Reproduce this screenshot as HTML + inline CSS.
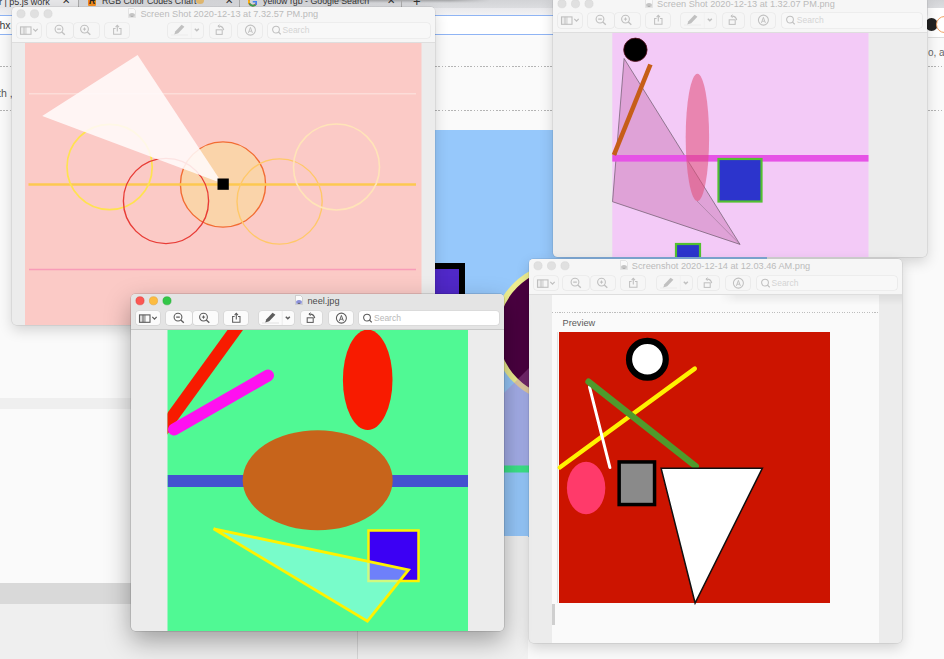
<!DOCTYPE html>
<html><head><meta charset="utf-8"><style>
html,body{margin:0;padding:0}
body{width:944px;height:659px;overflow:hidden;position:relative;background:#fafafa;font-family:"Liberation Sans",sans-serif}
</style></head><body>

<div style="position:absolute;left:0;top:0;width:944px;height:8px;background:linear-gradient(#d2d3d6,#dcdde0)"></div>
<div style="position:absolute;left:300px;top:0;width:190px;height:3px;background:linear-gradient(rgba(0,0,0,0.22),rgba(0,0,0,0));-webkit-mask-image:linear-gradient(90deg,transparent,#000 40px,#000 150px,transparent)"></div>
<div style="position:absolute;left:0;top:0;width:78px;height:8px;background:#e6e6e8"></div>
<div style="position:absolute;left:-1px;top:-3.5px;font-size:9px;color:#333;white-space:nowrap">r | p5.js work</div>
<div style="position:absolute;left:62px;top:-5px;font-size:10px;color:#333">&#x2715;</div>
<div style="position:absolute;left:78px;top:0;width:1px;height:7px;background:#aaa"></div>
<div style="position:absolute;left:87.5px;top:-3px;width:8.5px;height:9px;background:#f08a1c;border-radius:1px;overflow:hidden"><div style="position:absolute;left:1.5px;top:-1px;font-size:9px;font-weight:bold;font-style:italic;color:#222">R</div></div>
<div style="position:absolute;left:102px;top:-4px;font-size:8.8px;color:#333;white-space:nowrap">RGB Color Codes Chart</div>
<div style="position:absolute;left:195.5px;top:-3px;width:8px;height:7px;background:#e0b870;border-radius:50%"></div>
<div style="position:absolute;left:224.5px;top:-5px;font-size:10px;color:#333">&#x2715;</div>
<div style="position:absolute;left:239px;top:0;width:1px;height:7px;background:#aaa"></div>
<svg style="position:absolute;left:247.5px;top:-3px" width="9.5" height="9.5" viewBox="0 0 10 10"><path d="M8.6 2.6 A4.2 4.2 0 1 0 9.2 5.2" fill="none" stroke="#ea4335" stroke-width="1.8"/><path d="M1.2 3.4 A4.2 4.2 0 0 0 1.2 6.6" fill="none" stroke="#fbbc05" stroke-width="1.8"/><path d="M1.4 6.8 A4.2 4.2 0 0 0 8 8" fill="none" stroke="#34a853" stroke-width="1.8"/><path d="M5 5 H9.2 A4.2 4.2 0 0 1 8 8" fill="none" stroke="#4285f4" stroke-width="1.8"/></svg>
<div style="position:absolute;left:263px;top:-4px;font-size:8.8px;color:#333;white-space:nowrap">yellow rgb - Google Search</div>
<div style="position:absolute;left:386.5px;top:-5px;font-size:10px;color:#333">&#x2715;</div>
<div style="position:absolute;left:401px;top:0;width:1px;height:7px;background:#aaa"></div>
<div style="position:absolute;left:413px;top:-6px;font-size:13px;color:#333">+</div>
<div style="position:absolute;left:0;top:8px;width:944px;height:29px;background:linear-gradient(#e9e9ec 0,#f2f2f4 7px,#fbfbfc 8px)"></div><div style="position:absolute;left:928px;top:8px;width:16px;height:29px;background:#fff"></div>
<div style="position:absolute;left:0;top:15px;width:770px;height:20px;background:#fff;border-top:1px solid #8fb4f4;border-bottom:1px solid #8fb4f4;box-sizing:border-box"></div>
<div style="position:absolute;left:-0.5px;top:19px;font-size:10.5px;color:#3a3a3a">hx</div>
<div style="position:absolute;left:0;top:37px;width:944px;height:93px;background:#fafafa"></div>
<div style="position:absolute;left:0;top:66px;width:944px;height:1px;background:repeating-linear-gradient(90deg,#b4b4b4 0 1.6px,transparent 1.6px 3.2px)"></div>
<div style="position:absolute;left:0;top:110px;width:944px;height:1px;background:repeating-linear-gradient(90deg,#b4b4b4 0 1.6px,transparent 1.6px 3.2px)"></div>
<div style="position:absolute;left:-2px;top:86.5px;font-size:10.5px;color:#555">th ,</div>
<div style="position:absolute;left:928px;top:37px;width:16px;height:1px;background:#ddd"></div>
<div style="position:absolute;left:925px;top:18px;width:13px;height:13px;border-radius:50%;background:#222"></div>
<div style="position:absolute;left:936px;top:16px;width:17px;height:17px;border-radius:50%;background:#fff;border:1.5px solid #f0a060;box-sizing:border-box"></div>
<div style="position:absolute;left:928px;top:46.5px;font-size:10px;color:#666;white-space:nowrap">o, at</div>
<div style="position:absolute;left:435px;top:130px;width:332px;height:406.5px;background:#96c8fb"></div>
<div style="position:absolute;left:428px;top:262.7px;width:37.3px;height:40px;background:#5028c8;border:6.5px solid #000;box-sizing:border-box"></div>
<svg style="position:absolute;left:0;top:0" width="944" height="659">
<circle cx="562.7" cy="332.8" r="67" fill="#4a0040" stroke="#eeee90" stroke-width="5.5"/>
<polygon points="482,415 560,337 560,466 482,466" fill="#c478c4" fill-opacity="0.32"/>
<rect x="435" y="465.5" width="335" height="7" fill="#3ce488"/>
</svg>
<div style="position:absolute;left:0;top:398px;width:131px;height:11px;background:#efefef"></div>
<div style="position:absolute;left:0;top:583px;width:131px;height:21px;background:#d9d9d9"></div>
<div style="position:absolute;left:0;top:604px;width:357px;height:55px;background:#efefef"></div>
<div style="position:absolute;left:357px;top:604px;width:1px;height:55px;background:#d8d8d8"></div>
<div style="position:absolute;left:358px;top:536px;width:170px;height:123px;background:#f1f1f1"></div>

<div style="position:absolute;left:12px;top:6.6px;width:422.5px;height:318px;border-radius:4.5px;overflow:hidden;background:#ececec;box-shadow:0 0 0 0.5px rgba(0,0,0,0.12), 0 5px 14px rgba(0,0,0,0.16);z-index:2">
<div style="position:absolute;left:0;top:0;width:422.5px;height:36px;background:#f6f6f6;border-bottom:0.5px solid #dedede;box-sizing:border-box"><svg style="position:absolute;left:0;top:0" width="46" height="14"><circle cx="9" cy="6.75" r="4.1" fill="#e0e0e0" stroke="#d4d4d4" stroke-width="0.5"/><circle cx="22.5" cy="6.75" r="4.1" fill="#e0e0e0" stroke="#d4d4d4" stroke-width="0.5"/><circle cx="36" cy="6.75" r="4.1" fill="#e0e0e0" stroke="#d4d4d4" stroke-width="0.5"/></svg><div style="position:absolute;left:0;width:422.5px;top:1px;text-align:center;font-size:9.2px;line-height:11px;color:#bbbbbb;white-space:nowrap"><svg width="8" height="10" viewBox="0 0 8 10" style="margin-right:4px;vertical-align:-1.5px;opacity:0.5;filter:grayscale(1)"><path d="M0.5 0.5 H5.5 L7.5 2.5 V9.5 H0.5 Z" fill="#fbfbfb" stroke="#b8b8b8" stroke-width="0.6"/><path d="M1.2 6 Q4 3.8 6.8 6 V8.8 H1.2 Z" fill="#8a90d8"/><path d="M2.5 8.8 Q4 6.5 5.5 8.8 Z" fill="#555"/></svg>Screen Shot 2020-12-13 at 7.32.57 PM.png</div><div style="position:absolute;left:5px;top:16.5px;width:24px;height:14.5px;border-radius:3px;background:#f6f6f6;box-shadow:0 0 0 0.6px #e4e4e4, 0 0.5px 0.5px rgba(0,0,0,0.03);overflow:hidden"><svg width="24" height="15" viewBox="0 0 24 15"><rect x="3.5" y="3.9" width="10.5" height="7.4" fill="none" stroke="#c0c0c0" stroke-width="1.1"/><line x1="7" y1="3.9" x2="7" y2="11.3" stroke="#c0c0c0" stroke-width="1"/><line x1="9" y1="3.9" x2="9" y2="11.3" stroke="#c0c0c0" stroke-width="0.7"/><rect x="3.5" y="3.9" width="5.5" height="7.4" fill="#c0c0c0" fill-opacity="0.18"/><path d="M16.3 5.9 L18.5 8.1 L20.7 5.9" fill="none" stroke="#c0c0c0" stroke-width="1.3"/></svg></div><div style="position:absolute;left:34.5px;top:16.5px;width:26px;height:14.5px;border-radius:3px;background:#f6f6f6;box-shadow:0 0 0 0.6px #e4e4e4, 0 0.5px 0.5px rgba(0,0,0,0.03);overflow:hidden"><svg width="26" height="15" viewBox="0 0 26 15"><circle cx="12" cy="6.1" r="3.9" fill="none" stroke="#c0c0c0" stroke-width="1.1"/><line x1="14.8" y1="8.9" x2="17.8" y2="11.7" stroke="#c0c0c0" stroke-width="1.3"/><line x1="10.2" y1="6.1" x2="13.8" y2="6.1" stroke="#c0c0c0" stroke-width="1.1"/></svg></div><div style="position:absolute;left:62px;top:16.5px;width:24.5px;height:14.5px;border-radius:3px;background:#f6f6f6;box-shadow:0 0 0 0.6px #e4e4e4, 0 0.5px 0.5px rgba(0,0,0,0.03);overflow:hidden"><svg width="24" height="15" viewBox="0 0 24 15"><circle cx="10.5" cy="6.1" r="3.9" fill="none" stroke="#c0c0c0" stroke-width="1.1"/><line x1="13.3" y1="8.9" x2="16.3" y2="11.7" stroke="#c0c0c0" stroke-width="1.3"/><line x1="8.9" y1="6.1" x2="12.1" y2="6.1" stroke="#c0c0c0" stroke-width="1"/><line x1="10.5" y1="4.5" x2="10.5" y2="7.7" stroke="#c0c0c0" stroke-width="1"/></svg></div><div style="position:absolute;left:92.5px;top:16.5px;width:24px;height:14.5px;border-radius:3px;background:#f6f6f6;box-shadow:0 0 0 0.6px #e4e4e4, 0 0.5px 0.5px rgba(0,0,0,0.03);overflow:hidden"><svg width="24" height="15" viewBox="0 0 24 15"><path d="M10.6 5.5 L8.6 5.5 L8.6 11.2 L16 11.2 L16 5.5 L14 5.5" fill="none" stroke="#c0c0c0" stroke-width="1.05"/><line x1="12.3" y1="2.6" x2="12.3" y2="8.4" stroke="#c0c0c0" stroke-width="1.1"/><path d="M10.6 4.2 L12.3 2.4 L14 4.2" fill="none" stroke="#c0c0c0" stroke-width="1.1"/></svg></div><div style="position:absolute;left:156px;top:16.5px;width:35px;height:14.5px;border-radius:3px;background:#f6f6f6;box-shadow:0 0 0 0.6px #e4e4e4, 0 0.5px 0.5px rgba(0,0,0,0.03);overflow:hidden"><svg width="35" height="15" viewBox="0 0 35 15"><path d="M6.2 11.6 L7.4 8.2 L13.6 1.8 L16.4 3.8 L10.2 10.2 Z" fill="#c0c0c0"/><line x1="3" y1="12" x2="20" y2="12" stroke="#c0c0c0" stroke-width="0.6" opacity="0.25"/><line x1="23.2" y1="0" x2="23.2" y2="15" stroke="#c0c0c0" stroke-width="0.5" opacity="0.2"/><path d="M26.8 5.8 L28.8 7.8 L30.8 5.8" fill="none" stroke="#c0c0c0" stroke-width="1.5"/></svg></div><div style="position:absolute;left:197.5px;top:16.5px;width:21px;height:14.5px;border-radius:3px;background:#f6f6f6;box-shadow:0 0 0 0.6px #e4e4e4, 0 0.5px 0.5px rgba(0,0,0,0.03);overflow:hidden"><svg width="21" height="15" viewBox="0 0 21 15"><rect x="6.2" y="6.8" width="6" height="4.6" fill="none" stroke="#c0c0c0" stroke-width="1.05"/><path d="M8.3 3.2 Q12.6 2.6 13.8 7.2" fill="none" stroke="#c0c0c0" stroke-width="1.05"/><path d="M9.4 1.6 L7.9 3.2 L9.6 4.6" fill="none" stroke="#c0c0c0" stroke-width="1"/></svg></div><div style="position:absolute;left:225.5px;top:16.5px;width:24px;height:14.5px;border-radius:3px;background:#f6f6f6;box-shadow:0 0 0 0.6px #e4e4e4, 0 0.5px 0.5px rgba(0,0,0,0.03);overflow:hidden"><svg width="24" height="15" viewBox="0 0 24 15"><circle cx="12.4" cy="7.1" r="5" fill="none" stroke="#c0c0c0" stroke-width="1.05"/><path d="M10.4 9.9 L12.4 4.4 L14.4 9.9 M11.1 8.2 L13.7 8.2" fill="none" stroke="#c0c0c0" stroke-width="0.95"/></svg></div><div style="position:absolute;left:255.5px;top:16.5px;width:162px;height:14.5px;border-radius:3px;background:#f8f8f8;box-shadow:0 0 0 0.6px #e4e4e4;overflow:hidden"><div style="position:absolute;left:2px;top:0"><svg width="12" height="15" viewBox="0 0 12 15"><circle cx="6" cy="6.6" r="3.4" fill="none" stroke="#c0c0c0" stroke-width="1.05"/><line x1="8.5" y1="9.1" x2="10.8" y2="11.4" stroke="#c0c0c0" stroke-width="1.3"/></svg></div><div style="position:absolute;left:15px;top:2px;font-size:8.5px;color:#d4d4d4">Search</div></div></div>
<div style="position:absolute;left:0;top:36px;width:422.5px;height:282px;overflow:hidden"><svg width="422" height="283" viewBox="0 0 422 283" style="position:absolute;left:0.5px;top:0.4px">
<rect x="12" y="0" width="396.5" height="283" fill="#fbcac6"/>
<line x1="16" y1="50.8" x2="403" y2="50.8" stroke="#fde6e2" stroke-width="1"/>
<line x1="16" y1="226.5" x2="403" y2="226.5" stroke="#f89cb8" stroke-width="1.3"/>
<circle cx="210" cy="141.5" r="42.6" fill="#fad4aa" stroke="#f26c32" stroke-width="1.4"/>
<line x1="15.5" y1="141.5" x2="403" y2="141.5" stroke="#fdc850" stroke-width="2.5"/>
<circle cx="96.6" cy="124" r="42.6" fill="none" stroke="#ffe250" stroke-width="1.7"/>
<circle cx="153" cy="158" r="42.6" fill="none" stroke="#e83c36" stroke-width="1.4"/>
<circle cx="266.6" cy="158.5" r="42.6" fill="none" stroke="#ffc868" stroke-width="1.4"/>
<circle cx="323.5" cy="124" r="43" fill="none" stroke="#ffe4b8" stroke-width="1.6"/>
<polygon points="124.6,12 29.2,73 209.4,140.5" fill="#fffafa" fill-opacity="0.88"/>
<rect x="204.5" y="135.5" width="11.3" height="11.3" fill="#000"/>
</svg></div>
</div>
<div style="position:absolute;left:553px;top:-3.5px;width:373.8px;height:260.2px;border-radius:4.5px;overflow:hidden;background:#ececec;box-shadow:0 0 0 0.5px rgba(0,0,0,0.12), 0 5px 14px rgba(0,0,0,0.16);z-index:3">
<div style="position:absolute;left:0;top:0;width:373.8px;height:36px;background:#f6f6f6;border-bottom:0.5px solid #dedede;box-sizing:border-box"><svg style="position:absolute;left:0;top:0" width="46" height="14"><circle cx="9" cy="6.75" r="4.1" fill="#e0e0e0" stroke="#d4d4d4" stroke-width="0.5"/><circle cx="22.5" cy="6.75" r="4.1" fill="#e0e0e0" stroke="#d4d4d4" stroke-width="0.5"/><circle cx="36" cy="6.75" r="4.1" fill="#e0e0e0" stroke="#d4d4d4" stroke-width="0.5"/></svg><div style="position:absolute;left:0;width:373.8px;top:1px;text-align:center;font-size:9.2px;line-height:11px;color:#bbbbbb;white-space:nowrap"><svg width="8" height="10" viewBox="0 0 8 10" style="margin-right:4px;vertical-align:-1.5px;opacity:0.5;filter:grayscale(1)"><path d="M0.5 0.5 H5.5 L7.5 2.5 V9.5 H0.5 Z" fill="#fbfbfb" stroke="#b8b8b8" stroke-width="0.6"/><path d="M1.2 6 Q4 3.8 6.8 6 V8.8 H1.2 Z" fill="#8a90d8"/><path d="M2.5 8.8 Q4 6.5 5.5 8.8 Z" fill="#555"/></svg>Screen Shot 2020-12-13 at 1.32.07 PM.png</div><div style="position:absolute;left:5px;top:16.5px;width:24px;height:14.5px;border-radius:3px;background:#f6f6f6;box-shadow:0 0 0 0.6px #e4e4e4, 0 0.5px 0.5px rgba(0,0,0,0.03);overflow:hidden"><svg width="24" height="15" viewBox="0 0 24 15"><rect x="3.5" y="3.9" width="10.5" height="7.4" fill="none" stroke="#c0c0c0" stroke-width="1.1"/><line x1="7" y1="3.9" x2="7" y2="11.3" stroke="#c0c0c0" stroke-width="1"/><line x1="9" y1="3.9" x2="9" y2="11.3" stroke="#c0c0c0" stroke-width="0.7"/><rect x="3.5" y="3.9" width="5.5" height="7.4" fill="#c0c0c0" fill-opacity="0.18"/><path d="M16.3 5.9 L18.5 8.1 L20.7 5.9" fill="none" stroke="#c0c0c0" stroke-width="1.3"/></svg></div><div style="position:absolute;left:34.5px;top:16.5px;width:26px;height:14.5px;border-radius:3px;background:#f6f6f6;box-shadow:0 0 0 0.6px #e4e4e4, 0 0.5px 0.5px rgba(0,0,0,0.03);overflow:hidden"><svg width="26" height="15" viewBox="0 0 26 15"><circle cx="12" cy="6.1" r="3.9" fill="none" stroke="#c0c0c0" stroke-width="1.1"/><line x1="14.8" y1="8.9" x2="17.8" y2="11.7" stroke="#c0c0c0" stroke-width="1.3"/><line x1="10.2" y1="6.1" x2="13.8" y2="6.1" stroke="#c0c0c0" stroke-width="1.1"/></svg></div><div style="position:absolute;left:62px;top:16.5px;width:24.5px;height:14.5px;border-radius:3px;background:#f6f6f6;box-shadow:0 0 0 0.6px #e4e4e4, 0 0.5px 0.5px rgba(0,0,0,0.03);overflow:hidden"><svg width="24" height="15" viewBox="0 0 24 15"><circle cx="10.5" cy="6.1" r="3.9" fill="none" stroke="#c0c0c0" stroke-width="1.1"/><line x1="13.3" y1="8.9" x2="16.3" y2="11.7" stroke="#c0c0c0" stroke-width="1.3"/><line x1="8.9" y1="6.1" x2="12.1" y2="6.1" stroke="#c0c0c0" stroke-width="1"/><line x1="10.5" y1="4.5" x2="10.5" y2="7.7" stroke="#c0c0c0" stroke-width="1"/></svg></div><div style="position:absolute;left:92.5px;top:16.5px;width:24px;height:14.5px;border-radius:3px;background:#f6f6f6;box-shadow:0 0 0 0.6px #e4e4e4, 0 0.5px 0.5px rgba(0,0,0,0.03);overflow:hidden"><svg width="24" height="15" viewBox="0 0 24 15"><path d="M10.6 5.5 L8.6 5.5 L8.6 11.2 L16 11.2 L16 5.5 L14 5.5" fill="none" stroke="#c0c0c0" stroke-width="1.05"/><line x1="12.3" y1="2.6" x2="12.3" y2="8.4" stroke="#c0c0c0" stroke-width="1.1"/><path d="M10.6 4.2 L12.3 2.4 L14 4.2" fill="none" stroke="#c0c0c0" stroke-width="1.1"/></svg></div><div style="position:absolute;left:128px;top:16.5px;width:35px;height:14.5px;border-radius:3px;background:#f6f6f6;box-shadow:0 0 0 0.6px #e4e4e4, 0 0.5px 0.5px rgba(0,0,0,0.03);overflow:hidden"><svg width="35" height="15" viewBox="0 0 35 15"><path d="M6.2 11.6 L7.4 8.2 L13.6 1.8 L16.4 3.8 L10.2 10.2 Z" fill="#c0c0c0"/><line x1="3" y1="12" x2="20" y2="12" stroke="#c0c0c0" stroke-width="0.6" opacity="0.25"/><line x1="23.2" y1="0" x2="23.2" y2="15" stroke="#c0c0c0" stroke-width="0.5" opacity="0.2"/><path d="M26.8 5.8 L28.8 7.8 L30.8 5.8" fill="none" stroke="#c0c0c0" stroke-width="1.5"/></svg></div><div style="position:absolute;left:169.5px;top:16.5px;width:21px;height:14.5px;border-radius:3px;background:#f6f6f6;box-shadow:0 0 0 0.6px #e4e4e4, 0 0.5px 0.5px rgba(0,0,0,0.03);overflow:hidden"><svg width="21" height="15" viewBox="0 0 21 15"><rect x="6.2" y="6.8" width="6" height="4.6" fill="none" stroke="#c0c0c0" stroke-width="1.05"/><path d="M8.3 3.2 Q12.6 2.6 13.8 7.2" fill="none" stroke="#c0c0c0" stroke-width="1.05"/><path d="M9.4 1.6 L7.9 3.2 L9.6 4.6" fill="none" stroke="#c0c0c0" stroke-width="1"/></svg></div><div style="position:absolute;left:197.5px;top:16.5px;width:24px;height:14.5px;border-radius:3px;background:#f6f6f6;box-shadow:0 0 0 0.6px #e4e4e4, 0 0.5px 0.5px rgba(0,0,0,0.03);overflow:hidden"><svg width="24" height="15" viewBox="0 0 24 15"><circle cx="12.4" cy="7.1" r="5" fill="none" stroke="#c0c0c0" stroke-width="1.05"/><path d="M10.4 9.9 L12.4 4.4 L14.4 9.9 M11.1 8.2 L13.7 8.2" fill="none" stroke="#c0c0c0" stroke-width="0.95"/></svg></div><div style="position:absolute;left:228.8px;top:16.5px;width:140px;height:14.5px;border-radius:3px;background:#f8f8f8;box-shadow:0 0 0 0.6px #e4e4e4;overflow:hidden"><div style="position:absolute;left:2px;top:0"><svg width="12" height="15" viewBox="0 0 12 15"><circle cx="6" cy="6.6" r="3.4" fill="none" stroke="#c0c0c0" stroke-width="1.05"/><line x1="8.5" y1="9.1" x2="10.8" y2="11.4" stroke="#c0c0c0" stroke-width="1.3"/></svg></div><div style="position:absolute;left:15px;top:2px;font-size:8.5px;color:#d4d4d4">Search</div></div></div>
<div style="position:absolute;left:0;top:36px;width:373.8px;height:224.2px;overflow:hidden"><svg width="374" height="224" viewBox="0 0 374 224" style="position:absolute;left:0;top:0">
<rect x="59.3" y="0" width="256.2" height="224" fill="#f3caf7"/>
<polygon points="71.1,25.5 59.5,168.7 187,211.4" fill="#cc7ab8" fill-opacity="0.5" stroke="#6a5a6a" stroke-width="0.7"/>
<rect x="59.3" y="122" width="256.2" height="6.6" fill="#e653e6"/>
<ellipse cx="144.4" cy="104.5" rx="11.7" ry="63.7" fill="#e04e78" fill-opacity="0.56"/>
<line x1="144" y1="168" x2="187" y2="211.4" stroke="#6a5a6a" stroke-width="0.7" opacity="0.5"/>
<rect x="165.5" y="126" width="43" height="42.5" fill="#2c34cc" stroke="#52c030" stroke-width="2.2"/>
<rect x="123" y="211" width="24" height="20" fill="#2c34cc" stroke="#52c030" stroke-width="2.2"/>
<line x1="97.4" y1="31.5" x2="60.9" y2="122" stroke="#c65e18" stroke-width="4.6"/>
<circle cx="82.4" cy="16.8" r="11.7" fill="#000" stroke="#5a1020" stroke-width="0.8"/>
</svg></div>
</div>
<div style="position:absolute;left:528.5px;top:259px;width:373px;height:384px;border-radius:4.5px;overflow:hidden;background:#ececec;box-shadow:0 0 0 0.5px rgba(0,0,0,0.12), 0 5px 14px rgba(0,0,0,0.16);z-index:4">
<div style="position:absolute;left:0;top:0;width:373px;height:36px;background:#f6f6f6;border-bottom:0.5px solid #dedede;box-sizing:border-box"><svg style="position:absolute;left:0;top:0" width="46" height="14"><circle cx="9" cy="6.75" r="4.1" fill="#e0e0e0" stroke="#d4d4d4" stroke-width="0.5"/><circle cx="22.5" cy="6.75" r="4.1" fill="#e0e0e0" stroke="#d4d4d4" stroke-width="0.5"/><circle cx="36" cy="6.75" r="4.1" fill="#e0e0e0" stroke="#d4d4d4" stroke-width="0.5"/></svg><div style="position:absolute;left:0;width:373px;top:1px;text-align:center;font-size:9.2px;line-height:11px;color:#bbbbbb;white-space:nowrap"><svg width="8" height="10" viewBox="0 0 8 10" style="margin-right:4px;vertical-align:-1.5px;opacity:0.5;filter:grayscale(1)"><path d="M0.5 0.5 H5.5 L7.5 2.5 V9.5 H0.5 Z" fill="#fbfbfb" stroke="#b8b8b8" stroke-width="0.6"/><path d="M1.2 6 Q4 3.8 6.8 6 V8.8 H1.2 Z" fill="#8a90d8"/><path d="M2.5 8.8 Q4 6.5 5.5 8.8 Z" fill="#555"/></svg>Screenshot 2020-12-14 at 12.03.46 AM.png</div><div style="position:absolute;left:5px;top:16.5px;width:24px;height:14.5px;border-radius:3px;background:#f6f6f6;box-shadow:0 0 0 0.6px #e4e4e4, 0 0.5px 0.5px rgba(0,0,0,0.03);overflow:hidden"><svg width="24" height="15" viewBox="0 0 24 15"><rect x="3.5" y="3.9" width="10.5" height="7.4" fill="none" stroke="#c0c0c0" stroke-width="1.1"/><line x1="7" y1="3.9" x2="7" y2="11.3" stroke="#c0c0c0" stroke-width="1"/><line x1="9" y1="3.9" x2="9" y2="11.3" stroke="#c0c0c0" stroke-width="0.7"/><rect x="3.5" y="3.9" width="5.5" height="7.4" fill="#c0c0c0" fill-opacity="0.18"/><path d="M16.3 5.9 L18.5 8.1 L20.7 5.9" fill="none" stroke="#c0c0c0" stroke-width="1.3"/></svg></div><div style="position:absolute;left:34.5px;top:16.5px;width:26px;height:14.5px;border-radius:3px;background:#f6f6f6;box-shadow:0 0 0 0.6px #e4e4e4, 0 0.5px 0.5px rgba(0,0,0,0.03);overflow:hidden"><svg width="26" height="15" viewBox="0 0 26 15"><circle cx="12" cy="6.1" r="3.9" fill="none" stroke="#c0c0c0" stroke-width="1.1"/><line x1="14.8" y1="8.9" x2="17.8" y2="11.7" stroke="#c0c0c0" stroke-width="1.3"/><line x1="10.2" y1="6.1" x2="13.8" y2="6.1" stroke="#c0c0c0" stroke-width="1.1"/></svg></div><div style="position:absolute;left:62px;top:16.5px;width:24.5px;height:14.5px;border-radius:3px;background:#f6f6f6;box-shadow:0 0 0 0.6px #e4e4e4, 0 0.5px 0.5px rgba(0,0,0,0.03);overflow:hidden"><svg width="24" height="15" viewBox="0 0 24 15"><circle cx="10.5" cy="6.1" r="3.9" fill="none" stroke="#c0c0c0" stroke-width="1.1"/><line x1="13.3" y1="8.9" x2="16.3" y2="11.7" stroke="#c0c0c0" stroke-width="1.3"/><line x1="8.9" y1="6.1" x2="12.1" y2="6.1" stroke="#c0c0c0" stroke-width="1"/><line x1="10.5" y1="4.5" x2="10.5" y2="7.7" stroke="#c0c0c0" stroke-width="1"/></svg></div><div style="position:absolute;left:92.5px;top:16.5px;width:24px;height:14.5px;border-radius:3px;background:#f6f6f6;box-shadow:0 0 0 0.6px #e4e4e4, 0 0.5px 0.5px rgba(0,0,0,0.03);overflow:hidden"><svg width="24" height="15" viewBox="0 0 24 15"><path d="M10.6 5.5 L8.6 5.5 L8.6 11.2 L16 11.2 L16 5.5 L14 5.5" fill="none" stroke="#c0c0c0" stroke-width="1.05"/><line x1="12.3" y1="2.6" x2="12.3" y2="8.4" stroke="#c0c0c0" stroke-width="1.1"/><path d="M10.6 4.2 L12.3 2.4 L14 4.2" fill="none" stroke="#c0c0c0" stroke-width="1.1"/></svg></div><div style="position:absolute;left:128px;top:16.5px;width:35px;height:14.5px;border-radius:3px;background:#f6f6f6;box-shadow:0 0 0 0.6px #e4e4e4, 0 0.5px 0.5px rgba(0,0,0,0.03);overflow:hidden"><svg width="35" height="15" viewBox="0 0 35 15"><path d="M6.2 11.6 L7.4 8.2 L13.6 1.8 L16.4 3.8 L10.2 10.2 Z" fill="#c0c0c0"/><line x1="3" y1="12" x2="20" y2="12" stroke="#c0c0c0" stroke-width="0.6" opacity="0.25"/><line x1="23.2" y1="0" x2="23.2" y2="15" stroke="#c0c0c0" stroke-width="0.5" opacity="0.2"/><path d="M26.8 5.8 L28.8 7.8 L30.8 5.8" fill="none" stroke="#c0c0c0" stroke-width="1.5"/></svg></div><div style="position:absolute;left:169.5px;top:16.5px;width:21px;height:14.5px;border-radius:3px;background:#f6f6f6;box-shadow:0 0 0 0.6px #e4e4e4, 0 0.5px 0.5px rgba(0,0,0,0.03);overflow:hidden"><svg width="21" height="15" viewBox="0 0 21 15"><rect x="6.2" y="6.8" width="6" height="4.6" fill="none" stroke="#c0c0c0" stroke-width="1.05"/><path d="M8.3 3.2 Q12.6 2.6 13.8 7.2" fill="none" stroke="#c0c0c0" stroke-width="1.05"/><path d="M9.4 1.6 L7.9 3.2 L9.6 4.6" fill="none" stroke="#c0c0c0" stroke-width="1"/></svg></div><div style="position:absolute;left:197.5px;top:16.5px;width:24px;height:14.5px;border-radius:3px;background:#f6f6f6;box-shadow:0 0 0 0.6px #e4e4e4, 0 0.5px 0.5px rgba(0,0,0,0.03);overflow:hidden"><svg width="24" height="15" viewBox="0 0 24 15"><circle cx="12.4" cy="7.1" r="5" fill="none" stroke="#c0c0c0" stroke-width="1.05"/><path d="M10.4 9.9 L12.4 4.4 L14.4 9.9 M11.1 8.2 L13.7 8.2" fill="none" stroke="#c0c0c0" stroke-width="0.95"/></svg></div><div style="position:absolute;left:228px;top:16.5px;width:140px;height:14.5px;border-radius:3px;background:#f8f8f8;box-shadow:0 0 0 0.6px #e4e4e4;overflow:hidden"><div style="position:absolute;left:2px;top:0"><svg width="12" height="15" viewBox="0 0 12 15"><circle cx="6" cy="6.6" r="3.4" fill="none" stroke="#c0c0c0" stroke-width="1.05"/><line x1="8.5" y1="9.1" x2="10.8" y2="11.4" stroke="#c0c0c0" stroke-width="1.3"/></svg></div><div style="position:absolute;left:15px;top:2px;font-size:8.5px;color:#d4d4d4">Search</div></div></div>
<div style="position:absolute;left:0;top:36px;width:373px;height:348px;overflow:hidden"><div style="position:absolute;left:23px;top:0;width:327.5px;height:348px;background:#fafafa"></div>
<div style="position:absolute;left:190px;top:0;width:183px;height:10px;background:linear-gradient(rgba(0,0,0,0.065),rgba(0,0,0,0));-webkit-mask-image:linear-gradient(90deg,transparent 0,#000 18px)"></div>
<div style="position:absolute;left:23px;top:17px;width:327.5px;height:1px;background:repeating-linear-gradient(90deg,#bdbdbd 0 1px,transparent 1px 2.5px)"></div>
<div style="position:absolute;left:34px;top:23px;font-size:9.2px;color:#5a5a5a">Preview</div>
<div style="position:absolute;left:23px;top:309px;width:3px;height:21px;background:#cfcfcf"></div>
<div style="position:absolute;left:28.5px;top:37px;width:0.6px;height:271px;background:#e0e0e0"></div>
<svg width="373" height="348" viewBox="0 0 373 348" style="position:absolute;left:0;top:0">
<rect x="30" y="37" width="271" height="271" fill="#cc1400"/>
<ellipse cx="57.1" cy="193" rx="19.2" ry="26.3" fill="#ff3a6a"/>
<line x1="30.7" y1="172.5" x2="165.8" y2="73.6" stroke="#fff200" stroke-width="4.4" stroke-linecap="round"/>
<line x1="60.5" y1="91.8" x2="80.9" y2="172.5" stroke="#ffffff" stroke-width="3" stroke-linecap="round"/>
<line x1="59.6" y1="86.8" x2="166.7" y2="171.3" stroke="#4f9a2c" stroke-width="6.5" stroke-linecap="round"/>
<circle cx="118.4" cy="64.3" r="18.4" fill="#fff" stroke="#000" stroke-width="6.2"/>
<rect x="90.15" y="166.95" width="35.4" height="42.6" fill="#8a8a8a" stroke="#000" stroke-width="3.5"/>
<polygon points="132.1,173.2 233.4,173.2 166.1,308" fill="#fff" stroke="#111" stroke-width="1.5"/>
</svg></div>
</div>
<div style="position:absolute;left:131px;top:294.4px;width:373px;height:336.5px;border-radius:4.5px;overflow:hidden;background:#ececec;box-shadow:0 0 0 0.5px rgba(0,0,0,0.2), 0 10px 26px rgba(0,0,0,0.34);z-index:5">
<div style="position:absolute;left:0;top:0;width:373px;height:36px;background:#e4e4e4;border-bottom:0.5px solid #c8c8c8;box-sizing:border-box"><svg style="position:absolute;left:0;top:0" width="46" height="14"><circle cx="9" cy="6.75" r="4.1" fill="#fc5753" stroke="#df3d39" stroke-width="0.5"/><circle cx="22.5" cy="6.75" r="4.1" fill="#fdbc40" stroke="#de9f34" stroke-width="0.5"/><circle cx="36" cy="6.75" r="4.1" fill="#33c748" stroke="#27aa35" stroke-width="0.5"/></svg><div style="position:absolute;left:0;width:373px;top:1px;text-align:center;font-size:9.2px;line-height:11px;color:#4d4d4d;white-space:nowrap"><svg width="8" height="10" viewBox="0 0 8 10" style="margin-right:4px;vertical-align:-1.5px;"><path d="M0.5 0.5 H5.5 L7.5 2.5 V9.5 H0.5 Z" fill="#fbfbfb" stroke="#b8b8b8" stroke-width="0.6"/><path d="M1.2 6 Q4 3.8 6.8 6 V8.8 H1.2 Z" fill="#8a90d8"/><path d="M2.5 8.8 Q4 6.5 5.5 8.8 Z" fill="#555"/></svg>neel.jpg</div><div style="position:absolute;left:5px;top:16.5px;width:24px;height:14.5px;border-radius:3px;background:#fbfbfb;box-shadow:0 0 0 0.6px #d2d2d2, 0 0.5px 0.5px rgba(0,0,0,0.08);overflow:hidden"><svg width="24" height="15" viewBox="0 0 24 15"><rect x="3.5" y="3.9" width="10.5" height="7.4" fill="none" stroke="#5c5c5c" stroke-width="1.1"/><line x1="7" y1="3.9" x2="7" y2="11.3" stroke="#5c5c5c" stroke-width="1"/><line x1="9" y1="3.9" x2="9" y2="11.3" stroke="#5c5c5c" stroke-width="0.7"/><rect x="3.5" y="3.9" width="5.5" height="7.4" fill="#5c5c5c" fill-opacity="0.18"/><path d="M16.3 5.9 L18.5 8.1 L20.7 5.9" fill="none" stroke="#5c5c5c" stroke-width="1.3"/></svg></div><div style="position:absolute;left:34.5px;top:16.5px;width:26px;height:14.5px;border-radius:3px;background:#fbfbfb;box-shadow:0 0 0 0.6px #d2d2d2, 0 0.5px 0.5px rgba(0,0,0,0.08);overflow:hidden"><svg width="26" height="15" viewBox="0 0 26 15"><circle cx="12" cy="6.1" r="3.9" fill="none" stroke="#5c5c5c" stroke-width="1.1"/><line x1="14.8" y1="8.9" x2="17.8" y2="11.7" stroke="#5c5c5c" stroke-width="1.3"/><line x1="10.2" y1="6.1" x2="13.8" y2="6.1" stroke="#5c5c5c" stroke-width="1.1"/></svg></div><div style="position:absolute;left:62px;top:16.5px;width:24.5px;height:14.5px;border-radius:3px;background:#fbfbfb;box-shadow:0 0 0 0.6px #d2d2d2, 0 0.5px 0.5px rgba(0,0,0,0.08);overflow:hidden"><svg width="24" height="15" viewBox="0 0 24 15"><circle cx="10.5" cy="6.1" r="3.9" fill="none" stroke="#5c5c5c" stroke-width="1.1"/><line x1="13.3" y1="8.9" x2="16.3" y2="11.7" stroke="#5c5c5c" stroke-width="1.3"/><line x1="8.9" y1="6.1" x2="12.1" y2="6.1" stroke="#5c5c5c" stroke-width="1"/><line x1="10.5" y1="4.5" x2="10.5" y2="7.7" stroke="#5c5c5c" stroke-width="1"/></svg></div><div style="position:absolute;left:92.5px;top:16.5px;width:24px;height:14.5px;border-radius:3px;background:#fbfbfb;box-shadow:0 0 0 0.6px #d2d2d2, 0 0.5px 0.5px rgba(0,0,0,0.08);overflow:hidden"><svg width="24" height="15" viewBox="0 0 24 15"><path d="M10.6 5.5 L8.6 5.5 L8.6 11.2 L16 11.2 L16 5.5 L14 5.5" fill="none" stroke="#5c5c5c" stroke-width="1.05"/><line x1="12.3" y1="2.6" x2="12.3" y2="8.4" stroke="#5c5c5c" stroke-width="1.1"/><path d="M10.6 4.2 L12.3 2.4 L14 4.2" fill="none" stroke="#5c5c5c" stroke-width="1.1"/></svg></div><div style="position:absolute;left:128px;top:16.5px;width:35px;height:14.5px;border-radius:3px;background:#fbfbfb;box-shadow:0 0 0 0.6px #d2d2d2, 0 0.5px 0.5px rgba(0,0,0,0.08);overflow:hidden"><svg width="35" height="15" viewBox="0 0 35 15"><path d="M6.2 11.6 L7.4 8.2 L13.6 1.8 L16.4 3.8 L10.2 10.2 Z" fill="#5c5c5c"/><line x1="3" y1="12" x2="20" y2="12" stroke="#5c5c5c" stroke-width="0.6" opacity="0.25"/><line x1="23.2" y1="0" x2="23.2" y2="15" stroke="#5c5c5c" stroke-width="0.5" opacity="0.2"/><path d="M26.8 5.8 L28.8 7.8 L30.8 5.8" fill="none" stroke="#5c5c5c" stroke-width="1.5"/></svg></div><div style="position:absolute;left:169.5px;top:16.5px;width:21px;height:14.5px;border-radius:3px;background:#fbfbfb;box-shadow:0 0 0 0.6px #d2d2d2, 0 0.5px 0.5px rgba(0,0,0,0.08);overflow:hidden"><svg width="21" height="15" viewBox="0 0 21 15"><rect x="6.2" y="6.8" width="6" height="4.6" fill="none" stroke="#5c5c5c" stroke-width="1.05"/><path d="M8.3 3.2 Q12.6 2.6 13.8 7.2" fill="none" stroke="#5c5c5c" stroke-width="1.05"/><path d="M9.4 1.6 L7.9 3.2 L9.6 4.6" fill="none" stroke="#5c5c5c" stroke-width="1"/></svg></div><div style="position:absolute;left:197.5px;top:16.5px;width:24px;height:14.5px;border-radius:3px;background:#fbfbfb;box-shadow:0 0 0 0.6px #d2d2d2, 0 0.5px 0.5px rgba(0,0,0,0.08);overflow:hidden"><svg width="24" height="15" viewBox="0 0 24 15"><circle cx="12.4" cy="7.1" r="5" fill="none" stroke="#5c5c5c" stroke-width="1.05"/><path d="M10.4 9.9 L12.4 4.4 L14.4 9.9 M11.1 8.2 L13.7 8.2" fill="none" stroke="#5c5c5c" stroke-width="0.95"/></svg></div><div style="position:absolute;left:228px;top:16.5px;width:140px;height:14.5px;border-radius:3px;background:#ffffff;box-shadow:0 0 0 0.6px #d2d2d2;overflow:hidden"><div style="position:absolute;left:2px;top:0"><svg width="12" height="15" viewBox="0 0 12 15"><circle cx="6" cy="6.6" r="3.4" fill="none" stroke="#5c5c5c" stroke-width="1.05"/><line x1="8.5" y1="9.1" x2="10.8" y2="11.4" stroke="#5c5c5c" stroke-width="1.3"/></svg></div><div style="position:absolute;left:15px;top:2px;font-size:8.5px;color:#b8b8b8">Search</div></div></div>
<div style="position:absolute;left:0;top:36px;width:373px;height:300.5px;overflow:hidden"><svg width="373" height="301" viewBox="0 0 373 301" style="position:absolute;left:0;top:0">
<defs><clipPath id="c3"><rect x="36.5" y="0" width="300.5" height="301"/></clipPath></defs>
<rect x="36.5" y="0" width="300.5" height="301" fill="#50f994"/>
<g clip-path="url(#c3)">
<line x1="36.5" y1="150.9" x2="337" y2="150.9" stroke="#4451d0" stroke-width="12"/>
<ellipse cx="186.7" cy="150.2" rx="75" ry="50" fill="#c7641b"/>
<ellipse cx="236.7" cy="49.8" rx="24.8" ry="50.2" fill="#f81b00"/>
<line x1="111.5" y1="-10" x2="24.4" y2="110" stroke="#f81b00" stroke-width="12.5"/>
<line x1="137" y1="45.5" x2="43" y2="99.5" stroke="#ff10f0" stroke-width="12" stroke-linecap="round"/>
<rect x="237.5" y="200.5" width="50" height="50.5" fill="#3c00f4" stroke="#fff200" stroke-width="2.5"/>
<polygon points="82.6,198.8 277.5,239.8 236.4,291.2" fill="#a0ffff" fill-opacity="0.5" stroke="#fff200" stroke-width="2.8"/>
</g>
</svg></div>
</div>
</body></html>
